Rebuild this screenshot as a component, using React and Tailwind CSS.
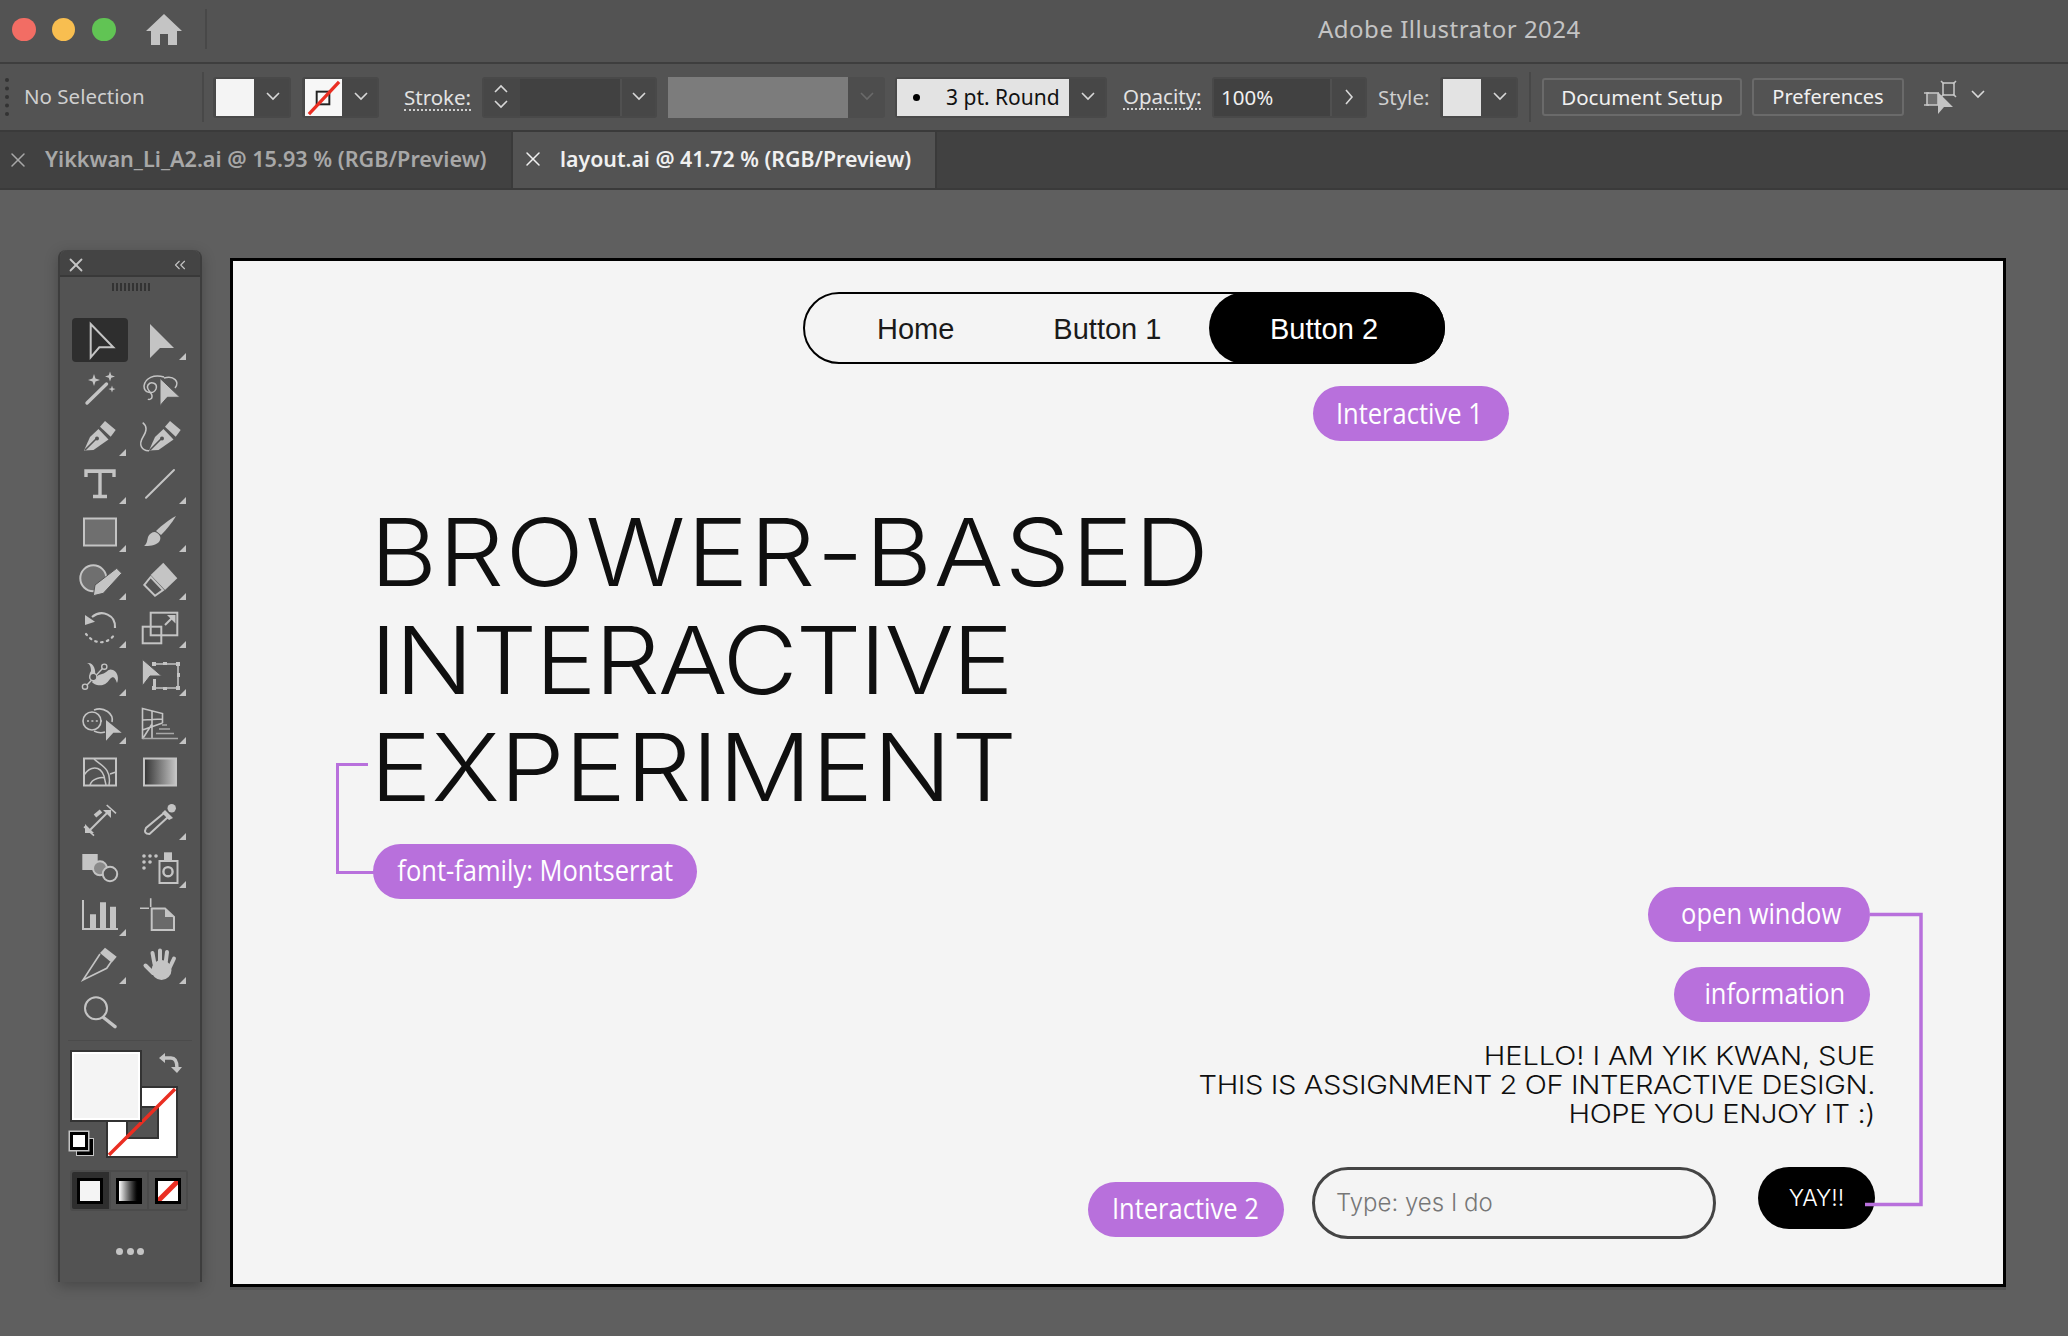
import { X, ChevronsLeft } from 'lucide-react'

const ui = "font-['Noto_Sans',sans-serif]"
const G = '#c4c4c4'

function Chevron({ dir = 'down', color = '#d8d8d8' }) {
  const d = { down: 'M2 4l6 6 6-6', up: 'M2 10l6-6 6 6', right: 'M5 1l6 7-6 7' }[dir]
  return (
    <svg width="16" height="16" viewBox="0 0 16 16" fill="none" stroke={color} strokeWidth="1.6">
      <path d={d} />
    </svg>
  )
}

function NoneMark({ size = 38 }) {
  return (
    <svg width={size} height={size} viewBox="0 0 38 38">
      <rect width="38" height="38" fill="#f7f7f7" />
      <rect x="12" y="13" width="13" height="13" fill="none" stroke="#222" strokeWidth="2" />
      <path d="M4 36L35 3" stroke="#ea2e22" strokeWidth="3.4" />
    </svg>
  )
}

function SwatchGroup({ children, className = '' }) {
  return (
    <div className={`flex h-[41px] items-center rounded-[3px] border-2 border-[#494949] bg-[#474747] ${className}`}>
      {children}
      <div className="flex h-full flex-1 items-center justify-center pl-[2px]">
        <Chevron />
      </div>
    </div>
  )
}

function DotLabel({ children, className = '' }) {
  return (
    <span className={`whitespace-nowrap border-b-2 border-dotted border-[#cfcfcf] leading-[23px] text-[#e2e2e2] ${className}`}>{children}</span>
  )
}

// each tool drawn in a 56x48 cell
function Tool({ children, tri, selected }) {
  return (
    <svg width="56" height="48" viewBox="0 0 56 48" fill="none" stroke={G} strokeWidth="2">
      {selected && <rect x="0" y="2" width="56" height="44" rx="4" fill="#2e2e2e" stroke="none" />}
      {children}
      {tri && <path d="M54 37v7h-7z" fill={G} stroke="none" />}
    </svg>
  )
}

const Sparkle = ({ x, y, r }) => (
  <path
    d={`M${x} ${y - r}L${x + r * 0.25} ${y - r * 0.25}L${x + r} ${y}L${x + r * 0.25} ${y + r * 0.25}L${x} ${y + r}L${x - r * 0.25} ${y + r * 0.25}L${x - r} ${y}L${x - r * 0.25} ${y - r * 0.25}Z`}
    fill={G}
    stroke="none"
  />
)

const Nib = ({ dx = 0 }) => (
  <g transform={`translate(${dx} 0)`}>
    <path d="M33 9L43.7 18L38.7 24.7L28 14.7Z" fill={G} stroke="none" />
    <path d="M26.5 17L36.5 27.5L21.5 38L12 38.6L18 25Z" fill={G} stroke="none" />
    <path d="M13 38L24 27" stroke="#535353" strokeWidth="1.6" />
    <circle cx="25" cy="26.5" r="2" fill="#535353" stroke="none" />
  </g>
)

const tools = [
  [
    <Tool selected><path d="M18.7 8L41.3 31.3H27.3L18.7 41.3Z" /></Tool>,
    <Tool tri><path d="M18 8L42 32H28L18 42Z" fill={G} stroke="none" /></Tool>,
  ],
  [
    <Tool>
      <path d="M15 39L34.5 20" strokeWidth="3.4" strokeLinecap="round" />
      <Sparkle x={22} y={16} r={6} />
      <Sparkle x={38} y={12.5} r={5} />
      <Sparkle x={40} y={25} r={3.5} />
    </Tool>,
    <Tool>
      <path d="M32 14C42 11 48 18 43 24M32 13C22 10 13 14 12 22C12 29 21 31 24 25C26 19 19 17 16 21C13 26 21 28 20 33C20 35 17 36 16 35" strokeWidth="1.5" />
      <path d="M28 14.3L48 33.3H35.3L28 41.7Z" fill={G} stroke="#535353" strokeWidth="1" />
    </Tool>,
  ],
  [
    <Tool tri><Nib /></Tool>,
    <Tool><Nib dx={5} /><path d="M10.7 10.7C15 14 15 19 11 25C6 33 10 39 17 38.7" strokeWidth="1.5" /></Tool>,
  ],
  [
    <Tool tri>
      <path d="M14 17V11H42V17M18 11H38M28 11V36M21 36.5H35" strokeWidth="3.4" />
      <path d="M14 10H42V13H14Z" fill={G} stroke="none" />
    </Tool>,
    <Tool tri><path d="M14 37.7L42 10" strokeLinecap="round" /></Tool>,
  ],
  [
    <Tool tri><rect x="12" y="10.5" width="32" height="27" fill="#6f6f6f" /></Tool>,
    <Tool tri>
      <path d="M44 8C40 15 34 22 29 27L24 23C30 17 38 11 44 8Z" fill={G} stroke="none" />
      <path d="M23 24C28 26 30 30 27 34C23 38 17 38 12 38C15 36 15 33 16 29C17 26 20 24 23 24Z" fill={G} stroke="none" />
    </Tool>,
  ],
  [
    <Tool tri>
      <circle cx="21.3" cy="22.3" r="13" fill="#6f6f6f" />
      <path d="M21.3 39.7L23 29L44.7 12.3L49.7 17.3L31.3 37.3Z" fill={G} stroke="#535353" strokeWidth="1" />
    </Tool>,
    <Tool tri>
      <path d="M31.3 6.7L45.3 22.3L33 34L18.7 19Z" fill={G} stroke="none" />
      <path d="M18.7 21L31 34L23 39.7L12.3 29Z" />
    </Tool>,
  ],
  [
    <Tool tri>
      <path d="M20 13C30 5 44 11 43 24" strokeWidth="2.2" />
      <path d="M13 11L23 17.7L13 21Z" fill={G} stroke="none" />
      <path d="M41 32.5C33 41 22 40 14 30" strokeWidth="2.2" strokeDasharray="1.6 4.4" strokeLinecap="round" />
    </Tool>,
    <Tool tri>
      <rect x="18.7" y="8.7" width="26.6" height="22.6" />
      <rect x="10.7" y="22.7" width="18.6" height="16.6" />
      <path d="M33 21L41 13" />
      <path d="M35 11H43.5V19.5Z" fill={G} stroke="none" />
    </Tool>,
  ],
  [
    <Tool tri>
      <path d="M15 11C22 10 24 18 23 24L30 22C36 20 36 16 41 18C46 20 47 27 45 31C43 25 41 24 38 27C34 33 30 34 25 33C19 32 15 24 19 19C19 15 18 12 15 11Z" fill={G} stroke="none" />
      <path d="M15 33L30.5 16.5" stroke="#535353" strokeWidth="3.2" />
      <path d="M15 33L30.5 16.5" strokeWidth="1.4" />
      <circle cx="13" cy="34.7" r="2.6" fill="#535353" strokeWidth="1.4" />
      <circle cx="32.3" cy="14.7" r="2.6" fill="#535353" strokeWidth="1.4" />
      <circle cx="21.3" cy="25" r="3.6" fill="#535353" strokeWidth="1.4" />
    </Tool>,
    <Tool tri>
      <path d="M22 12H46V36H22" strokeWidth="1.6" />
      <path d="M20 10h4v4h-4zM31 10h4v3h-4zM44 10h4v4h-4zM45 21h3v4h-3zM44 34h4v4h-4zM31 35h4v3h-4zM20 34h4v4h-4zM21 27h3v7h-3z" fill={G} stroke="none" />
      <path d="M10.3 7.3L29.7 24H18L10.3 34Z" fill={G} stroke="#535353" strokeWidth="1" />
    </Tool>,
  ],
  [
    <Tool tri>
      <circle cx="20" cy="21" r="9" strokeWidth="1.6" />
      <path d="M22 10C32 6 42 14 40 22M22 31C26 33 30 33 33 32" strokeWidth="1.6" />
      <path d="M15 21H30" strokeWidth="1.6" strokeDasharray="2 2.4" />
      <path d="M34 20L49.7 32.7H41.3L34 40.7Z" fill={G} stroke="none" />
    </Tool>,
    <Tool tri>
      <path d="M10.5 39V8.5L30.5 13.5V23M10.5 20L30.5 19M20 11V39M10.5 39L20 24M10.5 30L30.5 23" strokeWidth="1.6" />
      <path d="M10.5 38.5H46M24 33.5H42M27 29H38M30 25H35" strokeWidth="1.4" stroke="#a8a8a8" />
    </Tool>,
  ],
  [
    <Tool>
      <rect x="12" y="10.5" width="32" height="27" />
      <path d="M12 27C18 18 28 17 32 28L34 37M22 11C28 17 40 20 37 37M18 37C20 30 30 29 33 30M38 26L44 24" strokeWidth="1.5" />
    </Tool>,
    <Tool>
      <defs>
        <linearGradient id="toolgrad" x1="0" x2="1" y1="0" y2="0">
          <stop offset="0" stopColor="#333" />
          <stop offset="1" stopColor="#c4c4c4" />
        </linearGradient>
      </defs>
      <rect x="12" y="10.5" width="32" height="27" fill="url(#toolgrad)" />
    </Tool>,
  ],
  [
    <Tool>
      <path d="M34.7 9L44 17.3M12 30.7L22 39.7" strokeWidth="1.6" />
      <path d="M18 34L37 15" strokeWidth="2" />
      <path d="M31 14H39V22Z M13 28V37H22Z" fill={G} stroke="none" />
      <path d="M23 20L29 15" strokeWidth="4" />
    </Tool>,
    <Tool tri>
      <circle cx="39.7" cy="12.3" r="4.2" fill={G} stroke="none" />
      <path d="M33 14L41 22L37 24L30 17Z" fill={G} stroke="none" />
      <path d="M32 17L14 32Q11 38 17.5 38L36 21" />
    </Tool>,
  ],
  [
    <Tool>
      <rect x="10.3" y="10" width="15.4" height="16" fill={G} stroke="none" />
      <circle cx="28" cy="24.3" r="7" fill="#8a8a8a" />
      <circle cx="38" cy="30" r="7.2" fill="#535353" />
    </Tool>,
    <Tool tri>
      <rect x="27.5" y="17" width="18" height="22" />
      <rect x="32" y="8.3" width="8" height="8.4" fill={G} stroke="none" />
      <circle cx="36" cy="27.7" r="4.6" strokeWidth="2.4" />
      {[[12, 12], [18, 12], [24, 12], [12, 18], [18, 18], [12, 24]].map(([x, y]) => (
        <circle key={`${x}-${y}`} cx={x} cy={y} r="1.8" fill={G} stroke="none" />
      ))}
    </Tool>,
  ],
  [
    <Tool tri>
      <path d="M11 8V37H46" />
      <path d="M18 22.3h6V37h-6zM28 10.3h6V37h-6zM38 14.7h6V37h-6z" fill={G} stroke="none" />
    </Tool>,
    <Tool>
      <path d="M19.7 16.5H33L42 25V38H19.7Z" fill="#6a6a6a" />
      <path d="M33 17V25H42" fill={G} stroke="none" />
      <path d="M8 16.3H17M18.7 6.3V15" strokeWidth="1.6" />
    </Tool>,
  ],
  [
    <Tool tri>
      <path d="M33 7.7L44.7 16.7L39.7 22.7L28 13Z" fill={G} stroke="none" />
      <path d="M28 14L11 40L34.7 28.3L39 22" strokeWidth="1.6" />
    </Tool>,
    <Tool tri>
      <g strokeWidth="4" strokeLinecap="round">
        <path d="M22.5 24L20.5 13M28 24V10.5M33.5 24L35 12M37.5 28L42 18.5M21 33L13.5 25.5" />
      </g>
      <ellipse cx="29.5" cy="30" rx="10" ry="10" fill={G} stroke="none" />
    </Tool>,
  ],
  [
    <Tool>
      <circle cx="24" cy="20.3" r="11" />
      <path d="M31.5 29.5L43 38.7" strokeWidth="3.4" strokeLinecap="round" />
    </Tool>,
    null,
  ],
]

function ToolPanel() {
  return (
    <div className="flex h-[1032px] w-[144px] flex-none flex-col rounded-t-[8px] border-x-2 border-[#3d3d3d] bg-[#535353] shadow-[0_4px_14px_rgba(0,0,0,0.25)]">
      <div className="flex h-[27px] flex-none items-center justify-between rounded-t-[8px] border-b-2 border-[#393939] bg-[#444444] pl-[5px] pr-[11px] pt-[4px]">
        <X size={22} color={G} strokeWidth={2} />
        <ChevronsLeft size={18} color={G} strokeWidth={1.5} />
      </div>
      <div className="mt-[6px] flex h-[8px] justify-center gap-[2px] pl-[1px]">
        {Array.from({ length: 10 }).map((_, i) => (
          <span key={i} className="h-[8px] w-[2px] bg-[#333333]" />
        ))}
      </div>
      <div className="ml-[12px] mt-[25px] grid grid-cols-[56px_56px] gap-x-[4px]">
        {tools.flat().map((t, i) => (
          <div key={i} className="h-[48px]">{t}</div>
        ))}
      </div>
      <div className="mx-[8px] mt-[4px] h-[1px] flex-none bg-[#4b4b4b]" />
      <div className="relative ml-[10px] mt-[9px] h-[108px] w-[112px] flex-none">
        <div className="absolute left-[36px] top-[36px] h-[72px] w-[72px] border-2 border-[#333333]">
          <svg width="68" height="68" viewBox="0 0 68 68" className="block">
            <rect width="68" height="68" fill="#fff" />
            <rect x="19" y="19" width="31" height="31" fill="#535353" stroke="#333" strokeWidth="2" />
            <path d="M1 67L67 1" stroke="#ea2e22" strokeWidth="3.4" />
          </svg>
        </div>
        <div className="absolute left-0 top-0 h-[72px] w-[72px] border-2 border-[#333333] bg-[#f4f4f4] shadow-[inset_0_0_0_2px_#ffffff]" />
        <svg className="absolute left-[88px] top-[2px]" width="24" height="24" viewBox="0 0 24 24" fill="none" stroke={G}>
          <path d="M5 6H13C17 6 19 9 19 16" strokeWidth="3.4" />
          <path d="M1 6L7 1V11Z M13 15H24L19 21Z" fill={G} stroke="none" />
        </svg>
        <div className="absolute left-0 top-[82px] h-[24px] w-[24px]">
          <div className="absolute left-[6px] top-[6px] h-[18px] w-[18px] border-[1.5px] border-[#c4c4c4] bg-black" />
          <div className="absolute left-0 top-0 h-[18px] w-[18px] border-[3px] border-black bg-white shadow-[0_0_0_1.5px_#c4c4c4]" />
        </div>
      </div>
      <div className="ml-[10px] mt-[12px] flex h-[41px] w-[118px] flex-none gap-[2px] rounded-[3px] border-2 border-[#4b4b4b] bg-[#4b4b4b]">
        <div className="flex flex-1 items-center justify-center rounded-l-[2px] bg-[#2e2e2e]">
          <span className="h-[26px] w-[26px] border-[3px] border-black bg-[#f4f4f4]" />
        </div>
        <div className="flex flex-1 items-center justify-center bg-[#535353]">
          <span className="h-[26px] w-[26px] border-[3px] border-black bg-gradient-to-r from-white to-black" />
        </div>
        <div className="flex flex-1 items-center justify-center bg-[#535353]">
          <svg width="26" height="26" viewBox="0 0 26 26">
            <rect width="26" height="26" fill="#fff" />
            <path d="M2 24L24 2" stroke="#ea2e22" strokeWidth="5" />
            <rect x="1.5" y="1.5" width="23" height="23" fill="none" stroke="#000" strokeWidth="3" />
          </svg>
        </div>
      </div>
      <div className="mt-[37px] flex justify-center gap-[3.5px]">
        <span className="h-[7px] w-[7px] rounded-full bg-[#c4c4c4]" />
        <span className="h-[7px] w-[7px] rounded-full bg-[#c4c4c4]" />
        <span className="h-[7px] w-[7px] rounded-full bg-[#c4c4c4]" />
      </div>
    </div>
  )
}

function Pill({ children, className = '' }) {
  return (
    <div className={`flex h-[55px] flex-none items-center justify-center rounded-full bg-[#b870dc] pb-[3px] font-['Open_Sans',sans-serif] text-[30px] text-white ${className}`}>
      <span className="inline-block origin-center scale-x-[.85] whitespace-nowrap">{children}</span>
    </div>
  )
}

function Artboard() {
  return (
    <div className="relative mt-[8px] flex h-[1029px] w-[1776px] flex-none flex-col border-[3px] border-black bg-[#f4f4f4] font-['Inter',sans-serif] text-[#0f0f0f] shadow-[0_3px_0_rgba(0,0,0,0.12)]">
      <div className="ml-[570px] mt-[31px] flex h-[72px] w-[642px] flex-none items-center rounded-full border-2 border-black pt-[3px] font-['Liberation_Sans',sans-serif] text-[29px] text-[#1a1a1a]">
        <span className="ml-[72px]">Home</span>
        <span className="ml-[99px]">Button 1</span>
        <div className="-my-[2px] -mr-[2px] -mt-[5px] ml-auto flex h-[72px] w-[236px] items-center justify-center rounded-full bg-black pr-[6px] pt-[3px] text-white">Button 2</div>
      </div>
      <Pill className="ml-[1080px] mt-[22px] w-[196px] pr-[3px]">Interactive 1</Pill>

      <h1 className="ml-[137px] mt-[58px] origin-left scale-x-[1.1] text-[94px] font-[350] leading-[107.5px]">
        <span className="block tracking-[1.3px]">BROWER-BASED</span>
        <span className="block tracking-[-1.9px]">INTERACTIVE</span>
        <span className="block tracking-[-0.1px]">EXPERIMENT</span>
      </h1>

      <div className="flex items-start pr-[128px]">
        <Pill className="ml-[140px] mt-[22px] w-[324px]">font-family: Montserrat</Pill>
        <div className="ml-auto mt-[65px] flex flex-col items-end">
          <Pill className="mr-[5px] w-[222px] pl-[5px]">open window</Pill>
          <Pill className="mr-[5px] mt-[25px] w-[196px] pl-[6px]">information</Pill>
          <p className="mt-[19px] origin-right scale-x-[1.12] text-right text-[26px] font-[350] leading-[29.4px]">
            <span className="block tracking-[-0.1px]">HELLO! I AM YIK KWAN, SUE</span>
            <span className="block tracking-[-0.36px]">THIS IS ASSIGNMENT 2 OF INTERACTIVE DESIGN.</span>
            <span className="block tracking-[-0.38px]">HOPE YOU ENJOY IT :)</span>
          </p>
          <div className="mt-[38px] flex items-start">
            <Pill className="mt-[15px] w-[196px] pr-[2px]">Interactive 2</Pill>
            <input
              placeholder="Type: yes I do"
              className="ml-[28px] h-[72px] w-[404px] rounded-full border-[3px] border-[#444444] bg-transparent pl-[21px] text-[24px] font-light outline-none placeholder:text-[#777777]"
            />
            <div className="ml-[42px] flex h-[62px] w-[117px] items-center justify-center rounded-full bg-black pt-[2px] text-[23px] font-light text-white">YAY!!</div>
          </div>
        </div>
      </div>

      <svg className="absolute left-[100px] top-[500px]" width="44" height="116" fill="none" stroke="#b870dc" strokeWidth="3">
        <path d="M35 3.5H4.5V111.5H41" />
      </svg>
      <svg className="absolute left-[1630px] top-[651px]" width="64" height="300" fill="none" stroke="#b870dc" strokeWidth="3.5">
        <path d="M7 2.5H58V292.5H2" />
      </svg>
    </div>
  )
}

export default function App() {
  return (
    <div className={`flex h-screen w-full flex-col overflow-hidden bg-[#5f5f5f] ${ui}`}>
      {/* title bar */}
      <div className="relative flex h-[64px] flex-none items-center border-b-2 border-[#3e3e3e] bg-[#535353] pb-[4px] pl-[12px]">
        <span className="h-[23px] w-[24px] rounded-full bg-[#f26d64]" />
        <span className="ml-[16px] h-[23px] w-[23px] rounded-full bg-[#f8be50]" />
        <span className="ml-[17px] h-[23px] w-[24px] rounded-full bg-[#61c454]" />
        <svg className="ml-[30px]" width="36" height="31" viewBox="0 0 36 31" fill={G}>
          <path d="M0 17L18 0L36 17H31V31H22V20H14V31H5V17Z" />
        </svg>
        <span className="ml-[23px] h-[40px] w-[2px] bg-[#484848]" />
        <span className="ml-[1111px] text-[24px] tracking-[0.5px] text-[#c4c4c4]">Adobe Illustrator 2024</span>
      </div>

      {/* control bar */}
      <div className="flex h-[68px] flex-none items-center border-b-2 border-[#3a3a3a] bg-[#535353] text-[20.5px]">
        <span className="ml-[5px] h-[38px] w-[4px] border-l-[4px] border-dotted border-[#333333]" />
        <span className="ml-[15px] w-[170px] pb-[1px] text-[#cfcfcf]">No Selection</span>
        <span className="ml-[8px] h-[50px] w-[2px] bg-[#484848]" />
        <SwatchGroup className="ml-[9px] w-[78px]">
          <span className="ml-[1px] h-[37px] w-[38px] bg-[#f4f4f4]" />
        </SwatchGroup>
        <SwatchGroup className="ml-[11px] w-[77px]">
          <span className="ml-[1px]"><NoneMark size={37} /></span>
        </SwatchGroup>
        <DotLabel className="ml-[25px] mt-[3px] w-[67px]">Stroke:</DotLabel>
        <div className="ml-[11px] flex h-[41px] w-[175px] items-stretch rounded-[3px] border-2 border-[#494949] bg-[#474747]">
          <div className="flex w-[34px] flex-col items-center justify-center -space-y-[1px]">
            <Chevron dir="up" />
            <Chevron />
          </div>
          <div className="ml-[2px] w-[100px] bg-[#414141]" />
          <div className="flex flex-1 items-center justify-center border-l-2 border-[#505050]">
            <Chevron />
          </div>
        </div>
        <div className="ml-[11px] flex h-[41px] w-[217px] rounded-[3px] bg-[#4d4d4d]">
          <span className="w-[180px] bg-[#7c7c7c]" />
          <div className="flex flex-1 items-center justify-center">
            <Chevron color="#6a6a6a" />
          </div>
        </div>
        <SwatchGroup className="ml-[10px] w-[212px]">
          <div className="flex h-[37px] w-[172px] items-center bg-[#e3e3e3] text-[#111111]">
            <span className="ml-[16px] h-[7px] w-[7px] rounded-full bg-black" />
            <span className="ml-[26px] whitespace-nowrap pt-[1px] text-[21px]">3 pt. Round</span>
          </div>
        </SwatchGroup>
        <DotLabel className="ml-[16px] w-[78px]">Opacity:</DotLabel>
        <div className="ml-[11px] flex h-[41px] w-[155px] rounded-[3px] border-2 border-[#494949] bg-[#414141]">
          <span className="ml-[7px] flex w-[109px] items-center text-[#f0f0f0]">100%</span>
          <div className="flex flex-1 items-center justify-center border-l-2 border-[#505050] bg-[#474747]">
            <Chevron dir="right" />
          </div>
        </div>
        <span className="ml-[11px] w-[51px] text-[#cfcfcf]">Style:</span>
        <SwatchGroup className="ml-[11px] w-[78px]">
          <span className="ml-[1px] h-[37px] w-[38px] bg-[#e3e3e3]" />
        </SwatchGroup>
        <span className="ml-[11px] h-[50px] w-[2px] bg-[#484848]" />
        <button className="ml-[11px] h-[38px] w-[200px] rounded-[3px] border-2 border-[#6a6a6a] text-[#f0f0f0]">Document Setup</button>
        <button className="ml-[10px] h-[38px] w-[152px] rounded-[3px] border-2 border-[#6a6a6a] text-[20px] text-[#f0f0f0]">Preferences</button>
        <svg className="ml-[20px]" width="33" height="34" viewBox="0 0 33 34" fill="none" stroke={G} strokeWidth="1.6">
          <rect x="3" y="13" width="11" height="12" fill="#6f6f6f" />
          <rect x="19" y="3" width="11" height="12" />
          <path d="M0 13h5M0 25h5M17 1l3 3M32 1l-3 3M17 17l3-3M32 17l-3-3" />
          <path d="M14 12L29 27H20L14 34Z" fill={G} stroke="none" />
        </svg>
        <span className="ml-[13px] -mt-[4px]"><Chevron /></span>
      </div>

      {/* document tabs */}
      <div className="flex h-[58px] flex-none items-stretch border-b-2 border-[#3a3a3a] bg-[#414141] pb-[1px] font-semibold">
        <div className="flex w-[511px] items-center text-[21.6px] text-[#a8a8a8]">
          <X className="ml-[6px]" size={24} strokeWidth={1.5} />
          <span className="ml-[15px] whitespace-nowrap">Yikkwan_Li_A2.ai @ 15.93 % (RGB/Preview)</span>
        </div>
        <div className="-mb-[1px] flex w-[426px] items-center border-x-2 border-[#3a3a3a] bg-[#535353] pb-[2px] text-[21.3px] text-[#f0f0f0]">
          <X className="ml-[8px]" size={24} strokeWidth={1.5} />
          <span className="ml-[15px] whitespace-nowrap">layout.ai @ 41.72 % (RGB/Preview)</span>
        </div>
      </div>

      {/* canvas */}
      <div className="flex flex-1 items-start gap-[28px] pl-[58px] pt-[60px]">
        <ToolPanel />
        <Artboard />
      </div>
    </div>
  )
}
